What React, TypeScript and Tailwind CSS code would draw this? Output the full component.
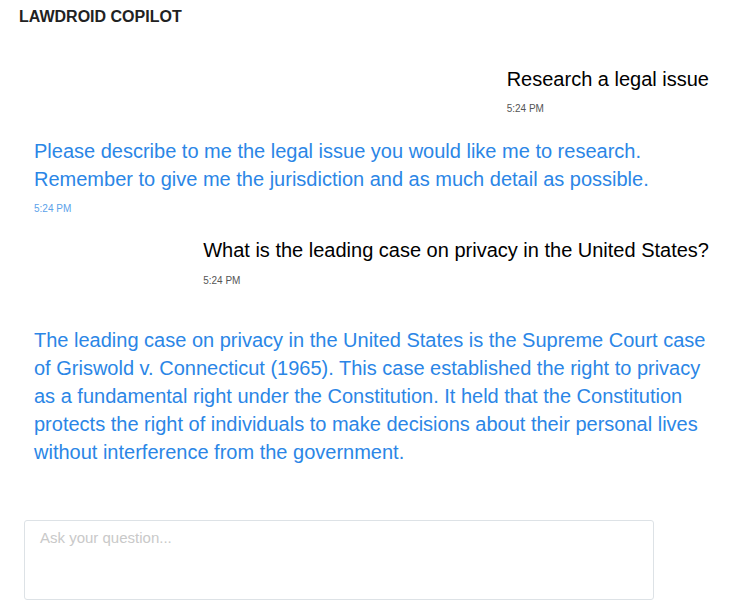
export default function App() {
  return (
    <div className="min-h-screen bg-white font-['Liberation_Sans',Arial,sans-serif]">
      {/* Header */}
      <div className="px-[19px] pt-[7px] text-[16px] leading-[20px] font-bold text-[#222]">
        LAWDROID COPILOT
      </div>

      {/* Conversation */}
      <div className="flex flex-col pl-[34px] pr-[30px] pt-[38px]">
        <div className="self-end">
          <p className="text-[20px] leading-[28px] text-black">Research a legal issue</p>
          <p className="mt-[10px] text-[10px] leading-[12px] text-[#555]">5:24 PM</p>
        </div>

        <div className="mt-[22px] max-w-[676px]">
          <p className="text-[20px] leading-[28px] text-[#2b86e6]">
            Please describe to me the legal issue you would like me to research. Remember to give me the jurisdiction and as much detail as possible.
          </p>
          <p className="mt-[10px] text-[10px] leading-[12px] text-[#5ba2ea]">5:24 PM</p>
        </div>

        <div className="mt-[21px] self-end">
          <p className="text-[20px] leading-[28px] text-black">
            What is the leading case on privacy in the United States?
          </p>
          <p className="mt-[11px] text-[10px] leading-[12px] text-[#555]">5:24 PM</p>
        </div>

        <div className="mt-[39px] max-w-[676px]">
          <p className="text-[20px] leading-[28px] text-[#2b86e6]">
            The leading case on privacy in the United States is the Supreme Court case of Griswold v. Connecticut (1965). This case established the right to privacy as a fundamental right under the Constitution. It held that the Constitution protects the right of individuals to make decisions about their personal lives without interference from the government.
          </p>
        </div>
      </div>

      {/* Input */}
      <div className="pl-[24px] pt-[54px]">
        <textarea
          placeholder="Ask your question..."
          className="block h-[80px] w-[630px] resize-none rounded-[3px] border border-[#dde2e6] px-[15px] py-[7px] text-[15px] leading-[20px] text-[#333] outline-none placeholder:text-[#c9c9c9]"
        />
      </div>
    </div>
  );
}
